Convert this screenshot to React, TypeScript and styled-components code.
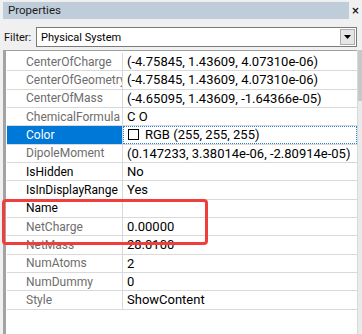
import React from 'react';
import styled, { createGlobalStyle } from 'styled-components';

const Global = createGlobalStyle`
  html, body { margin: 0; padding: 0; background: #f0f0f0; }
  body { font-family: Roboto, "Liberation Sans", sans-serif; }
`;

const Panel = styled.div`
  position: relative;
  width: 362px;
  height: 334px;
  overflow: hidden;
  background: #f0f0f0;
  display: flex;
  flex-direction: column;
`;

const TitleRow = styled.div`
  display: flex;
  align-items: center;
  height: 17px;
  margin-top: 2px;
  padding-left: 3px;
`;

const Title = styled.div`
  flex: 0 0 346px;
  height: 17px;
  box-sizing: border-box;
  padding-left: 5px;
  background: #bfcddb;
  color: #1b1b1b;
  font-size: 11.5px;
  line-height: 17px;
`;

const Close = styled.div`
  flex: 1;
  text-align: center;
  font-family: "DejaVu Sans", sans-serif;
  font-size: 10px;
  font-weight: bold;
  color: #111;
  line-height: 17px;
`;

const FilterRow = styled.div`
  display: flex;
  align-items: center;
  height: 20px;
  margin-top: 8px;
`;

const FilterLabel = styled.div`
  width: 36px;
  box-sizing: border-box;
  padding-left: 4px;
  font-size: 11px;
  color: #111;
`;

const Combo = styled.div`
  width: 321px;
  height: 20px;
  box-sizing: border-box;
  border: 1px solid #7a7a7a;
  background: #fff;
  display: flex;
  align-items: center;
  padding-left: 4px;
  padding-right: 1px;
`;

const ComboText = styled.div`
  flex: 1;
  font-size: 11px;
  color: #000;
`;

const DropButton = styled.div`
  width: 15px;
  height: 16px;
  box-sizing: border-box;
  border: 1px solid #adadad;
  background: #e5e5e5;
  display: flex;
  align-items: center;
  justify-content: center;
`;

const Grid = styled.div`
  flex: 1;
  display: flex;
  margin-top: 3px;
`;

const GridBody = styled.div`
  flex: 1;
  margin-left: 3px;
  border-left: 3px solid #a3a3a3;
  border-top: 1px solid #a0a0a0;
  padding-top: 2px;
  padding-left: 1px;
  background: #fff;
`;

const Scrollbar = styled.div`
  width: 4px;
  border-left: 1px solid #d8d8d8;
  background: #eaeaea;
  display: flex;
  flex-direction: column;
`;

const Thumb = styled.div`
  height: 51px;
  background: #c8c8c8;
`;

const Row = styled.div`
  display: grid;
  grid-template-columns: 116px 1fr;
  height: 18.33px;
  box-sizing: border-box;
  border-bottom: 1px solid #d9d9d9;
`;

const NameCell = styled.div<{ $state: 'ro' | 'rw' | 'sel' }>`
  box-sizing: border-box;
  border-right: 1px solid #d9d9d9;
  padding-left: 19px;
  font-size: 12px;
  white-space: nowrap;
  overflow: hidden;
  display: flex;
  align-items: center;
  background: ${(p) => (p.$state === 'sel' ? '#0078d7' : 'transparent')};
  color: ${(p) => (p.$state === 'sel' ? '#fff' : p.$state === 'ro' ? '#6d6d6d' : '#000')};
`;

const ValueCell = styled.div<{ $focus?: boolean }>`
  box-sizing: border-box;
  padding-left: 4px;
  font-size: 13px;
  white-space: nowrap;
  overflow: hidden;
  display: flex;
  align-items: center;
  gap: 6px;
  color: #000;
  outline: ${(p) => (p.$focus ? '1px dotted #2a7fd4' : 'none')};
  outline-offset: -1px;
`;

const Swatch = styled.span<{ $color: string }>`
  width: 11px;
  height: 11px;
  box-sizing: border-box;
  border: 1px solid #000;
  background: ${(p) => p.$color};
  margin-left: 1px;
`;

const Annotation = styled.div`
  position: absolute;
  left: 2px;
  top: 199px;
  width: 206px;
  height: 46px;
  box-sizing: border-box;
  border: 3px solid #f23d3d;
  border-radius: 4px;
  pointer-events: none;
`;

type Prop = { name: string; value: string; state: 'ro' | 'rw' | 'sel'; swatch?: string };

const props: Prop[] = [
  { name: 'CenterOfCharge', value: '(-4.75845, 1.43609, 4.07310e-06)', state: 'ro' },
  { name: 'CenterOfGeometry', value: '(-4.75845, 1.43609, 4.07310e-06)', state: 'ro' },
  { name: 'CenterOfMass', value: '(-4.65095, 1.43609, -1.64366e-05)', state: 'ro' },
  { name: 'ChemicalFormula', value: 'C O', state: 'ro' },
  { name: 'Color', value: 'RGB (255, 255, 255)', state: 'sel', swatch: '#ffffff' },
  { name: 'DipoleMoment', value: '(0.147233, 3.38014e-06, -2.80914e-05)', state: 'ro' },
  { name: 'IsHidden', value: 'No', state: 'rw' },
  { name: 'IsInDisplayRange', value: 'Yes', state: 'rw' },
  { name: 'Name', value: '', state: 'rw' },
  { name: 'NetCharge', value: '0.00000', state: 'ro' },
  { name: 'NetMass', value: '28.0100', state: 'ro' },
  { name: 'NumAtoms', value: '2', state: 'ro' },
  { name: 'NumDummy', value: '0', state: 'ro' },
  { name: 'Style', value: 'ShowContent', state: 'ro' },
];

export default function App() {
  return (
    <>
      <Global />
      <Panel>
        <TitleRow>
          <Title>Properties</Title>
          <Close>×</Close>
        </TitleRow>
        <FilterRow>
          <FilterLabel>Filter:</FilterLabel>
          <Combo>
            <ComboText>Physical System</ComboText>
            <DropButton>
              <svg width="7" height="4" viewBox="0 0 7 4">
                <path d="M0 0 H7 L3.5 4 Z" fill="#000" />
              </svg>
            </DropButton>
          </Combo>
        </FilterRow>
        <Grid>
          <GridBody>
            {props.map((p) => (
              <Row key={p.name}>
                <NameCell $state={p.state}>{p.name}</NameCell>
                <ValueCell $focus={p.state === 'sel'}>
                  {p.swatch && <Swatch $color={p.swatch} />}
                  {p.value}
                </ValueCell>
              </Row>
            ))}
          </GridBody>
          <Scrollbar>
            <Thumb />
          </Scrollbar>
        </Grid>
        <Annotation />
      </Panel>
    </>
  );
}
